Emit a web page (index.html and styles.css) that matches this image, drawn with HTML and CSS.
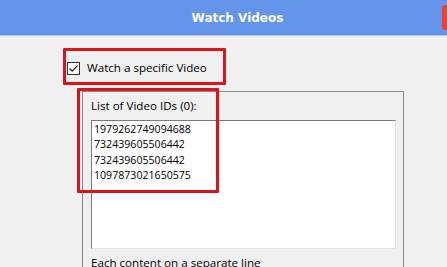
FILE: index.html
```html
<!DOCTYPE html>
<html>
<head>
<meta charset="utf-8">
<link rel="stylesheet" href="styles.css">
</head>
<body>
<div class="window">
  <header class="titlebar">
    <span class="title">Watch Videos</span>
    <span class="close"></span>
  </header>
  <main class="content">
    <label class="check-row">
      <span class="checkbox">
        <svg width="11" height="11" viewBox="0 0 11 11"><path d="M1.5 5.5 L4.2 8.2 L9.5 2.5" fill="none" stroke="#222" stroke-width="1.2"/></svg>
      </span>
      <span class="check-label">Watch a specific Video</span>
    </label>
    <section class="group">
      <div class="group-label">List of Video IDs (0):</div>
      <div class="textbox">1979262749094688<br>732439605506442<br>732439605506442<br>1097873021650575</div>
      <div class="hint">Each content on a separate line</div>
    </section>
  </main>
  <div class="mark mark-check"></div>
  <div class="mark mark-list"></div>
</div>
</body>
</html>
```
FILE: styles.css
```css
html, body {
  margin: 0;
  padding: 0;
  background: #f0f0f0;
  overflow: hidden;
}
.window {
  position: relative;
  width: 447px;
  height: 267px;
  overflow: hidden;
  font-family: "Open Sans", "Liberation Sans", sans-serif;
  color: #000;
}
.titlebar {
  position: relative;
  height: 35px;
  background: #6495ea;
  border-bottom: 1px solid #b9c9e8;
  display: flex;
  align-items: center;
  justify-content: center;
}
.title {
  font-family: "DejaVu Sans", sans-serif;
  font-weight: bold;
  font-size: 12px;
  color: #fff;
  padding-left: 28px;
}
.close {
  position: absolute;
  left: 442px;
  top: 5px;
  width: 12px;
  height: 25px;
  border-radius: 3px;
  background: #ec4330;
}
.content {
  padding: 25px 0 0 67px;
}
.check-row {
  display: flex;
  align-items: center;
  gap: 7px;
  height: 14px;
}
.checkbox {
  width: 11px;
  height: 11px;
  border: 1px solid #333;
  background: #fff;
  display: flex;
}
.check-label {
  font-size: 11.6px;
  line-height: 14px;
}
.group {
  margin: 16px 0 0 15px;
  width: 322px;
  height: 200px;
  border: 1px solid #8a8a8a;
  padding: 6px 0 0 8px;
  box-sizing: border-box;
}
.group-label {
  font-size: 11.6px;
  line-height: 15px;
}
.textbox {
  margin-top: 7px;
  width: 305px;
  height: 129px;
  box-sizing: border-box;
  background: #fff;
  border-top: 1px solid #7a7a7a;
  border-left: 1px solid #7a7a7a;
  border-right: 1px solid #e3e3e3;
  border-bottom: 1px solid #e3e3e3;
  padding: 1px 2px;
  font-size: 10.6px;
  line-height: 15.3px;
}
.hint {
  margin-top: 6px;
  font-size: 11.6px;
  line-height: 15px;
}
.mark {
  position: absolute;
  border: 3px solid #de1219;
  box-sizing: border-box;
  border-radius: 1px;
}
.mark-check {
  left: 63px;
  top: 48px;
  width: 163px;
  height: 37px;
}
.mark-list {
  left: 77px;
  top: 88px;
  width: 142px;
  height: 105px;
}
```
